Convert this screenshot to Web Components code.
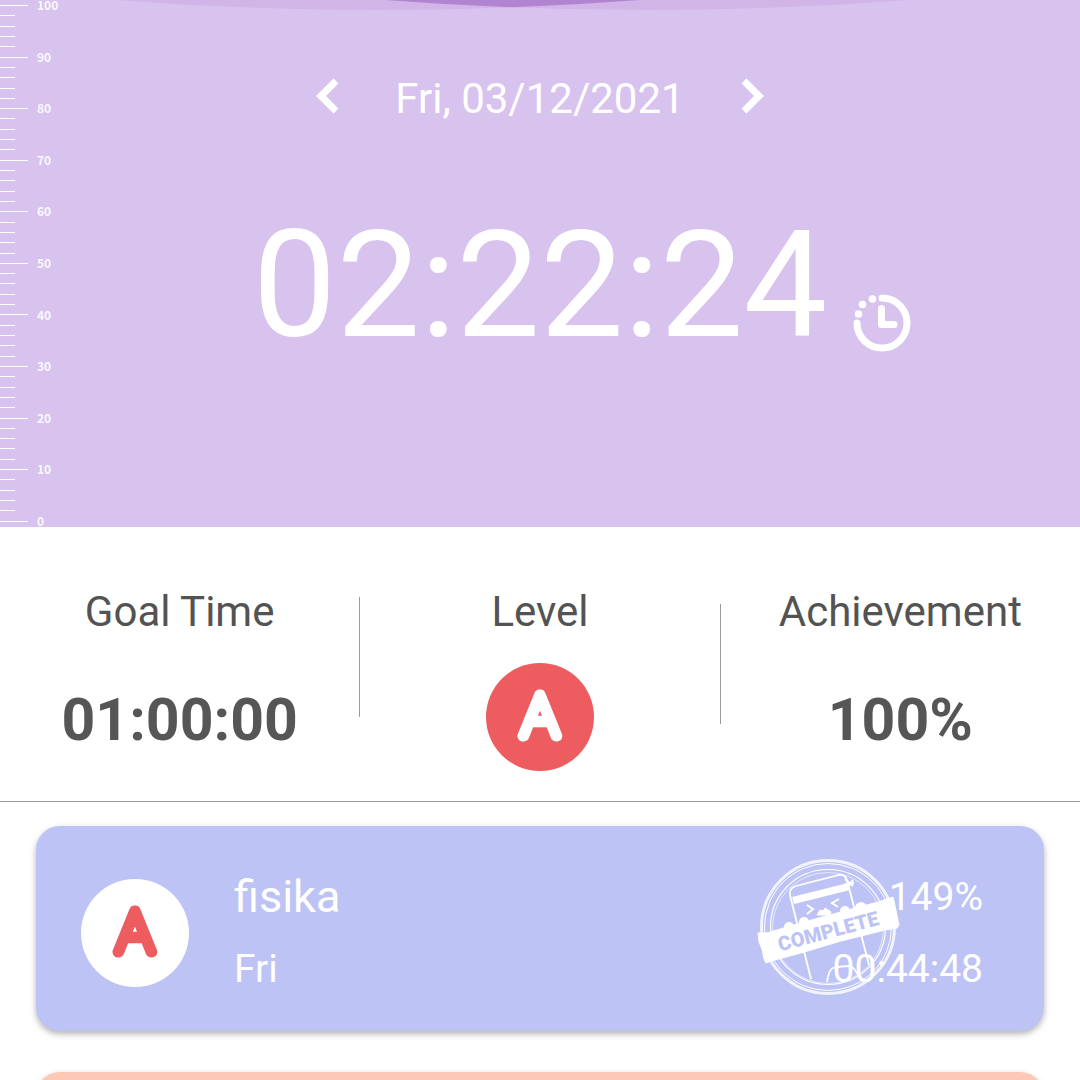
<!DOCTYPE html>
<html lang="en">
<head>
<meta charset="utf-8">
<meta name="viewport" content="width=device-width, initial-scale=1">
<title>Study timer</title>
<style>
    body {
        margin: 0;
        background: white;
        font-family: Roboto, sans-serif;
    }
</style>
</head>
<body>
<study-app></study-app>

<script>
class PercentRuler extends HTMLElement {
    constructor() {
        super();
        this.attachShadow({ mode: 'open' });
    }

    connectedCallback() {
        let ticks = '';
        let labels = '';
        for (let i = 0; i <= 50; i++) {
            ticks += i % 5 == 0 ? '<i class="major"></i>' : '<i></i>';
        }
        for (let n = 100; n >= 0; n -= 10) {
            labels += `<span>${n}</span>`;
        }
        this.shadowRoot.innerHTML = `
            <style>
            :host {
                display: flex;
                gap: 9px;
                color: rgba(255, 255, 255, .9);
            }
            .ticks, .labels {
                display: flex;
                flex-direction: column;
                justify-content: space-between;
            }
            .ticks {
                width: 28px;
                padding: 5px 0;
            }
            i {
                width: 15px;
                height: 1px;
                background: white;
            }
            .major {
                width: 28px;
            }
            .labels {
                padding-bottom: 1px;
                font: bold 12px/10px "Noto Sans CJK SC", sans-serif;
            }
            </style>
            <div class="ticks">${ticks}</div>
            <div class="labels">${labels}</div>
        `;
    }
}
customElements.define("percent-ruler", PercentRuler);

class TopWave extends HTMLElement {
    constructor() {
        super();
        this.attachShadow({ mode: 'open' });
    }

    connectedCallback() {
        this.shadowRoot.innerHTML = `
            <style>
            :host {
                display: block;
            }
            svg {
                display: block;
                width: 100%;
                height: 12px;
            }
            </style>
            <svg viewBox="0 0 1080 12" preserveAspectRatio="none" aria-hidden="true">
                <clipPath id="left"><path d="M115 0Q377 20 640 0Z"/></clipPath>
                <path d="M115 0Q377 20 640 0Z" fill="#d1b5e6"/>
                <path d="M385 0Q648 20 910 0Z" fill="#d1b5e6"/>
                <path d="M385 0Q648 20 910 0Z" fill="#b184d1" clip-path="url(#left)"/>
            </svg>
        `;
    }
}
customElements.define("top-wave", TopWave);

class DatePicker extends HTMLElement {
    constructor() {
        super();
        this.attachShadow({ mode: 'open' });
    }

    connectedCallback() {
        this.shadowRoot.innerHTML = `
            <style>
            :host {
                display: flex;
                justify-content: center;
                align-items: flex-end;
                gap: 48px;
                font-size: 42px;
                line-height: 48px;
            }
            button {
                padding: 0 8px 9px;
                border: 0;
                background: none;
                color: inherit;
                cursor: pointer;
            }
            svg {
                display: block;
                width: 24px;
                height: 36px;
                fill: none;
                stroke: currentColor;
                stroke-width: 7;
            }
            </style>
            <button type="button" aria-label="Previous day"><svg viewBox="0 0 24 36"><path d="M21 3L6 18L21 33"/></svg></button>
            <slot></slot>
            <button type="button" aria-label="Next day"><svg viewBox="0 0 24 36"><path d="M3 3L18 18L3 33"/></svg></button>
        `;
    }
}
customElements.define("date-picker", DatePicker);

class TimeDisplay extends HTMLElement {
    constructor() {
        super();
        this.attachShadow({ mode: 'open' });
    }

    connectedCallback() {
        this.shadowRoot.innerHTML = `
            <style>
            :host {
                display: grid;
                grid-template-columns: 1fr auto 1fr;
                column-gap: 25px;
                font-size: 149px;
                line-height: 176px;
            }
            .time {
                grid-column: 2;
            }
            button {
                align-self: end;
                justify-self: start;
                padding: 0 0 20px;
                border: 0;
                background: none;
                color: inherit;
                cursor: pointer;
            }
            svg {
                display: block;
                width: 60px;
                height: 60px;
                fill: none;
                stroke: currentColor;
                stroke-linecap: round;
                stroke-linejoin: round;
            }
            </style>
            <span class="time"><slot></slot></span>
            <button type="button" aria-label="Timer">
                <svg viewBox="0 0 60 60">
                    <path d="M30 5A25 25 0 1 1 5 30" stroke-width="7"/>
                    <path d="M29.500 15.500V31.500H42" stroke-width="7"/>
                    <g fill="currentColor" stroke="none">
                        <circle cx="20.500" cy="6" r="3.800"/>
                        <circle cx="10.500" cy="11.500" r="3.800"/>
                        <circle cx="6.500" cy="21" r="3.800"/>
                    </g>
                </svg>
            </button>
        `;
    }
}
customElements.define("time-display", TimeDisplay);

class LevelBadge extends HTMLElement {
    constructor() {
        super();
        this.attachShadow({ mode: 'open' });
    }

    connectedCallback() {
        this.shadowRoot.innerHTML = `
            <style>
            :host {
                display: block;
                width: 108px;
                height: 108px;
                border-radius: 50%;
                background: #ed5d60;
                color: white;
            }
            :host([light]) {
                background: white;
                color: #ed5d60;
            }
            svg {
                display: block;
            }
            text {
                font-family: Lato, sans-serif;
                font-size: 57px;
                font-weight: 100;
                text-anchor: middle;
                fill: currentColor;
                stroke: currentColor;
                stroke-width: 11px;
                stroke-linejoin: round;
            }
            </style>
            <svg viewBox="0 0 108 108"><text x="54" y="73">${this.getAttribute('level')}</text></svg>
        `;
    }
}
customElements.define("level-badge", LevelBadge);

class StatItem extends HTMLElement {
    constructor() {
        super();
        this.attachShadow({ mode: 'open' });
    }

    connectedCallback() {
        this.shadowRoot.innerHTML = `
            <style>
            :host {
                display: flex;
                flex-direction: column;
                align-items: center;
                gap: 27px;
            }
            .label {
                color: #535353;
                font-size: 42px;
                line-height: 48px;
            }
            .value {
                display: flex;
                align-items: flex-end;
                height: 108px;
                color: #565656;
                font-size: 59px;
                font-weight: bold;
                line-height: 102px;
            }
            </style>
            <span class="label">${this.getAttribute('label')}</span>
            <span class="value"><slot></slot></span>
        `;
    }
}
customElements.define("stat-item", StatItem);

class StatRow extends HTMLElement {
    constructor() {
        super();
        this.attachShadow({ mode: 'open' });
    }

    connectedCallback() {
        this.shadowRoot.innerHTML = `
            <style>
            :host {
                display: grid;
                grid-template-columns: 1fr 1px 1fr 1px 1fr;
                align-items: center;
                padding: 61px 0 30px;
                border-bottom: 1px solid #9a9a9a;
            }
            .line {
                height: 120px;
                background: #9a9a9a;
            }
            .first {
                margin-bottom: 46px;
            }
            .second {
                margin-bottom: 32px;
            }
            </style>
            <stat-item label="Goal Time">01:00:00</stat-item>
            <div class="line first"></div>
            <stat-item label="Level"><level-badge level="A"></level-badge></stat-item>
            <div class="line second"></div>
            <stat-item label="Achievement">100%</stat-item>
        `;
    }
}
customElements.define("stat-row", StatRow);

class CompleteStamp extends HTMLElement {
    constructor() {
        super();
        this.attachShadow({ mode: 'open' });
    }

    connectedCallback() {
        this.shadowRoot.innerHTML = `
            <style>
            :host {
                display: block;
                width: 144px;
                height: 140px;
            }
            svg {
                display: block;
                fill: none;
                stroke: white;
            }
            text {
                font-size: 20px;
                font-weight: 900;
                text-anchor: middle;
                fill: #bdc4f5;
                stroke: none;
            }
            </style>
            <svg viewBox="0 0 144 140">
                <circle cx="71" cy="69" r="66.500" stroke-width="3" opacity=".8"/>
                <circle cx="71" cy="69" r="63.500"/>
                <circle cx="71" cy="69" r="57.500" stroke-width="1.200"/>
                <circle cx="71" cy="70" r="55.500" opacity=".6"/>
                <!-- phone -->
                <path d="M54 121L33 37Q32 30 39 28L82 17Q88 16 90 22L112 107" stroke-width="1.800"/>
                <path d="M35 39L91 25L93 32L37 46Z" fill="white" stroke="none"/>
                <path d="M88 21L96 28M96 22L90 30M88 26L97 25" stroke-width="2"/>
                <path d="M50 47L56 51L50 56M82 41L75 45L81 49" stroke-width="2"/>
                <path d="M60 57L63 52L66 53L68 50L71 52L74 54L73 57Z" fill="white"/>
                <path d="M70 124Q72 111 76 110Q84 108 93 108Q98 110 100 116" stroke-width="1.800"/>
                <!-- bumps behind the ribbon -->
                <g fill="white" stroke="none">
                    <circle cx="32" cy="69" r="5"/>
                    <circle cx="47" cy="64" r="5"/>
                    <circle cx="88" cy="53" r="5"/>
                    <circle cx="104" cy="50" r="6"/>
                    <path d="M1 75L4 75L10 75L40 66L80 55L121 44L136 39L137 43L142 67L140 70L128 72L84 83L44 95L14 103L9 105L7 101L5 91L2 84Z" stroke="white" stroke-linejoin="round"/>
                </g>
                <text transform="translate(73 80) rotate(-15)">COMPLETE</text>
            </svg>
        `;
    }
}
customElements.define("complete-stamp", CompleteStamp);

class SubjectCard extends HTMLElement {
    constructor() {
        super();
        this.attachShadow({ mode: 'open' });
    }

    connectedCallback() {
        this.shadowRoot.innerHTML = `
            <style>
            :host {
                display: flex;
                align-items: center;
                gap: 45px;
                position: relative;
                flex: none;
                box-sizing: border-box;
                min-height: 205px;
                padding: 8px 61px 0 45px;
                border-radius: 24px;
                background: var(--card-color);
                box-shadow: 0 3px 6px rgba(0, 0, 0, .3);
                color: white;
                font-size: 39px;
            }
            .names, .numbers {
                display: flex;
                flex-direction: column;
                gap: 24px;
                line-height: 48px;
            }
            .names {
                flex: 1;
            }
            .numbers {
                align-items: flex-end;
                position: relative;
            }
            ::slotted([slot=name]) {
                font-size: 45px;
            }
            ::slotted(complete-stamp) {
                position: absolute;
                right: 143px;
                top: 32px;
            }
            </style>
            <slot name="badge"></slot>
            <div class="names"><slot name="name"></slot><slot name="day"></slot></div>
            <slot name="stamp"></slot>
            <div class="numbers"><slot name="percent"></slot><slot name="time"></slot></div>
        `;
    }
}
customElements.define("subject-card", SubjectCard);

class StudyApp extends HTMLElement {
    constructor() {
        super();
        this.attachShadow({ mode: 'open' });
    }

    connectedCallback() {
        this.shadowRoot.innerHTML = `
            <style>
            :host {
                display: flex;
                flex-direction: column;
                height: 100vh;
            }
            header {
                display: grid;
                flex: none;
                background: #d8c3ef;
                color: white;
            }
            header > * {
                grid-area: 1 / 1;
            }
            percent-ruler {
                justify-self: start;
            }
            .timer {
                display: flex;
                flex-direction: column;
                gap: 74px;
                padding: 75px 0 154px;
            }
            stat-row {
                flex: none;
            }
            main {
                display: flex;
                flex-direction: column;
                flex: 1;
                gap: 41px;
                min-height: 0;
                padding: 24px 36px 0;
                overflow-y: auto;
                scrollbar-width: none;
            }
            .blue {
                --card-color: #bdc4f5;
            }
            .peach {
                --card-color: #fdc8b5;
            }
            </style>
            <header>
                <top-wave></top-wave>
                <div class="timer">
                    <date-picker>Fri, 03/12/2021</date-picker>
                    <time-display>02:22:24</time-display>
                </div>
                <percent-ruler></percent-ruler>
            </header>
            <stat-row></stat-row>
            <main>
                <subject-card class="blue">
                    <level-badge slot="badge" level="A" light></level-badge>
                    <span slot="name">fisika</span>
                    <span slot="day">Fri</span>
                    <complete-stamp slot="stamp"></complete-stamp>
                    <span slot="percent">149%</span>
                    <span slot="time">00:44:48</span>
                </subject-card>
                <subject-card class="peach"></subject-card>
            </main>
        `;
    }
}
customElements.define("study-app", StudyApp);
</script>
</body>
</html>
